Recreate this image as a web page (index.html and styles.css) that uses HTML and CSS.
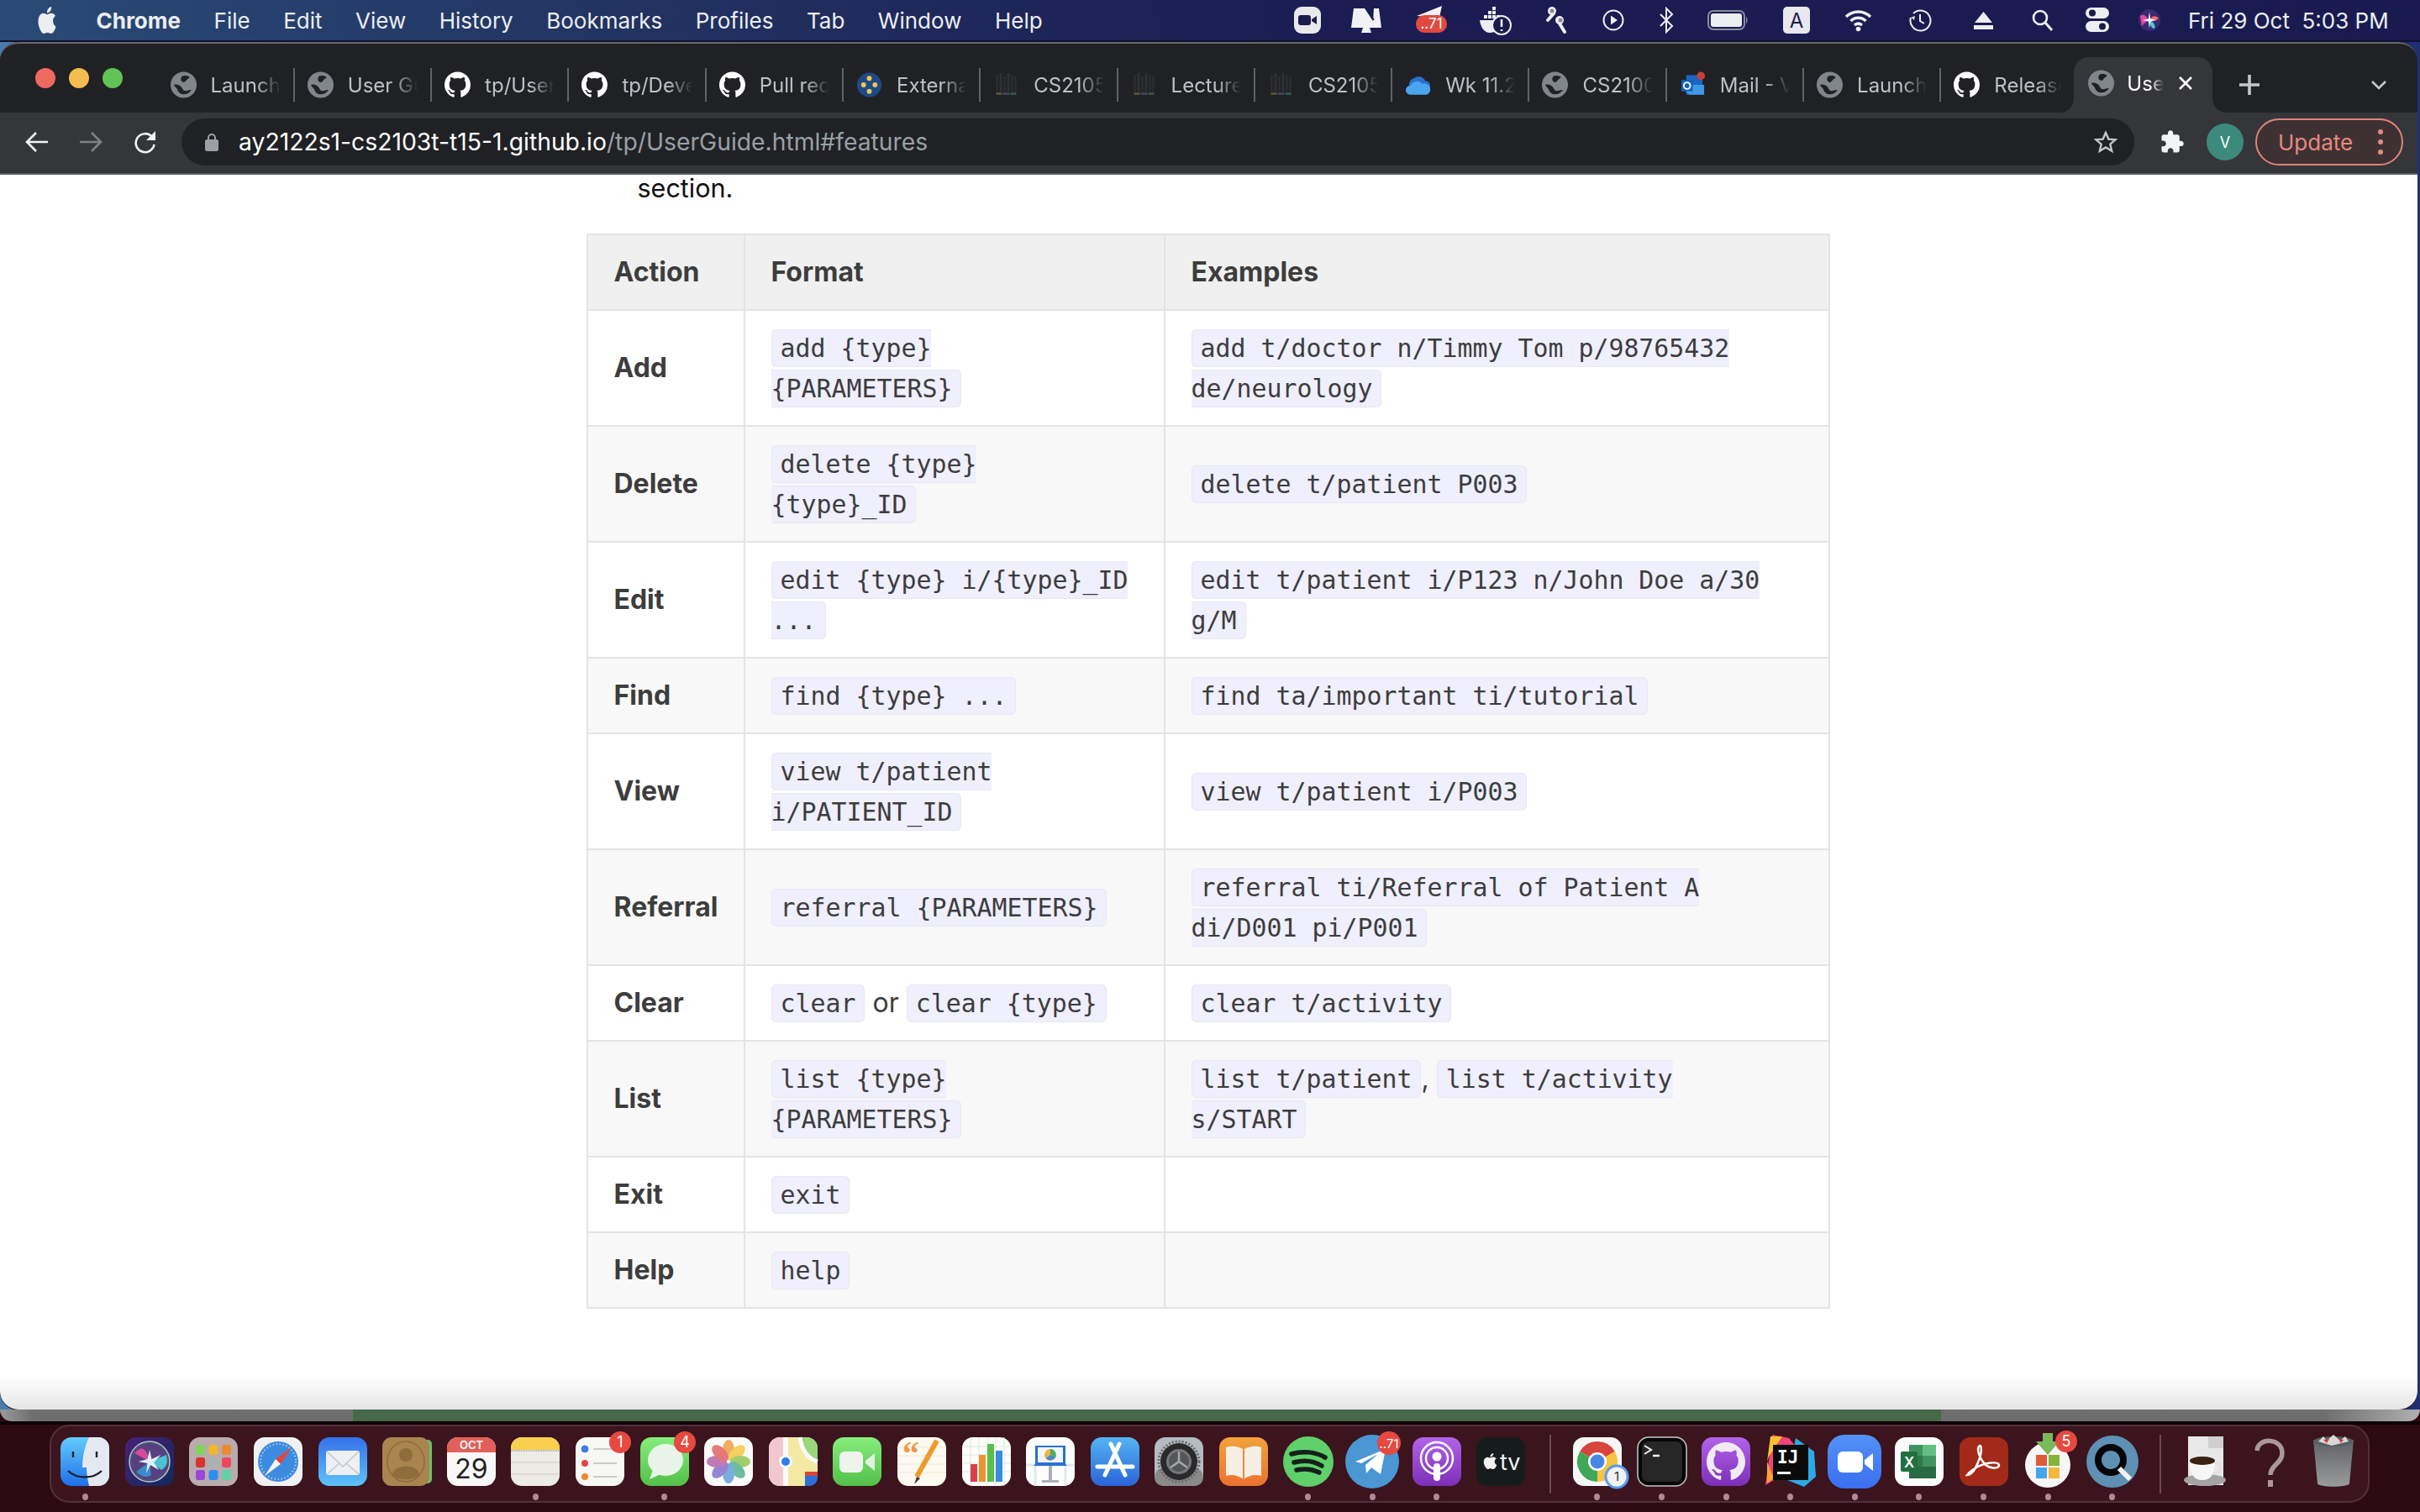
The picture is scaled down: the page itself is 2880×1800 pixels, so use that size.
FILE: index.html
```html
<!DOCTYPE html>
<html lang="en">
<head>
    <meta charset="UTF-8">
    <title>User Guide</title>
    <link rel="stylesheet" href="styles.css">
</head>
<body>
<svg class="defs" width="0" height="0">
    <defs>
        <symbol id="octocat" viewBox="0 0 16 16"><path d="M8 0C3.58 0 0 3.58 0 8c0 3.54 2.29 6.53 5.47 7.59.4.07.55-.17.55-.38 0-.19-.01-.82-.01-1.49-2.01.37-2.53-.49-2.69-.94-.09-.23-.48-.94-.82-1.13-.28-.15-.68-.52-.01-.53.63-.01 1.08.58 1.23.82.72 1.21 1.87.87 2.33.66.07-.52.28-.87.51-1.07-1.78-.2-3.64-.89-3.64-3.95 0-.87.31-1.59.82-2.15-.08-.2-.36-1.02.08-2.12 0 0 .67-.21 2.2.82.64-.18 1.32-.27 2-.27.68 0 1.36.09 2 .27 1.53-1.04 2.2-.82 2.2-.82.44 1.1.16 1.92.08 2.12.51.56.82 1.27.82 2.15 0 3.07-1.87 3.75-3.65 3.95.29.25.54.73.54 1.48 0 1.07-.01 1.93-.01 2.2 0 .21.15.46.55.38A8.013 8.013 0 0016 8c0-4.42-3.58-8-8-8z"/></symbol>
        <symbol id="globe" viewBox="0 0 28 28"><circle cx="14" cy="14" r="14" fill="#80868b"/><path d="M12 4c3-1 6-1 9 1-1 2-3 2-4 4s-3 3-5 1-1-4 0-6zM3 14c3-1 6 0 8 2s2 5 5 5 5-2 7-1c-2 3-5 5-9 5-3 0-6-2-7-5s-4-4-4-6z" fill="#202124" transform="translate(1 1) scale(.93)"/></symbol>
        <symbol id="mosaic" viewBox="0 0 28 32"><g fill="#2f3033"><rect x="2" y="4" width="2" height="20"/><rect x="6" y="2" width="3" height="22"/><rect x="11" y="6" width="2" height="18"/><rect x="15" y="2" width="3" height="22"/><rect x="20" y="4" width="2" height="20"/><rect x="24" y="6" width="2" height="18"/></g><rect x="2" y="25" width="7" height="3" fill="#5a4e36"/><rect x="10" y="25" width="8" height="3" fill="#45415c"/><rect x="19" y="25" width="7" height="3" fill="#36544c"/></symbol>
        <linearGradient id="g-finder" x1="0" y1="0" x2="0" y2="1"><stop offset="0" stop-color="#62cdfb"/><stop offset="1" stop-color="#1f6feb"/></linearGradient>
        <linearGradient id="g-mail" x1="0" y1="0" x2="0" y2="1"><stop offset="0" stop-color="#3670ea"/><stop offset="1" stop-color="#5cc3f9"/></linearGradient>
        <linearGradient id="g-green" x1="0" y1="0" x2="0" y2="1"><stop offset="0" stop-color="#86ee7c"/><stop offset="1" stop-color="#52c148"/></linearGradient>
        <linearGradient id="g-store" x1="0" y1="0" x2="0" y2="1"><stop offset="0" stop-color="#55b4f2"/><stop offset="1" stop-color="#2a63d8"/></linearGradient>
        <linearGradient id="g-books" x1="0" y1="0" x2="0" y2="1"><stop offset="0" stop-color="#f2a23a"/><stop offset="1" stop-color="#ec7130"/></linearGradient>
        <linearGradient id="g-purple" x1="0" y1="0" x2="0" y2="1"><stop offset="0" stop-color="#b263e8"/><stop offset="1" stop-color="#7c2fb8"/></linearGradient>
        <linearGradient id="g-zoom" x1="0" y1="0" x2="0" y2="1"><stop offset="0" stop-color="#5391f7"/><stop offset="1" stop-color="#3a6ff0"/></linearGradient>
        <linearGradient id="g-trash" x1="0" y1="0" x2="0" y2="1"><stop offset="0" stop-color="#5e6264"/><stop offset="1" stop-color="#9a9c9c"/></linearGradient>
        <linearGradient id="g-siri" x1="0" y1="0" x2="1" y2="1"><stop offset="0" stop-color="#4b1f78"/><stop offset="1" stop-color="#0e2a5c"/></linearGradient>
    </defs>
</svg>

<header class="menubar">
    <nav class="menus">
        <svg class="apple" width="26" height="32" viewBox="0 0 24 24" preserveAspectRatio="none"><path fill="#eceef2" d="M12.152 6.896c-.948 0-2.415-1.078-3.96-1.04-2.04.027-3.91 1.183-4.961 3.014-2.117 3.675-.546 9.103 1.519 12.09 1.013 1.454 2.208 3.09 3.792 3.039 1.52-.065 2.09-.987 3.935-.987 1.831 0 2.35.987 3.96.948 1.637-.026 2.676-1.48 3.676-2.948 1.156-1.688 1.636-3.325 1.662-3.415-.039-.013-3.182-1.221-3.22-4.857-.026-3.04 2.48-4.494 2.597-4.559-1.429-2.09-3.623-2.324-4.39-2.376-2-.156-3.675 1.09-4.61 1.09zM15.53 3.83c.843-1.012 1.4-2.427 1.245-3.83-1.207.052-2.662.805-3.532 1.818-.78.896-1.454 2.338-1.273 3.714 1.338.104 2.715-.688 3.559-1.701"/></svg>
        <span class="app-name">Chrome</span>
        <span>File</span>
        <span>Edit</span>
        <span>View</span>
        <span>History</span>
        <span>Bookmarks</span>
        <span>Profiles</span>
        <span>Tab</span>
        <span>Window</span>
        <span>Help</span>
    </nav>
    <div class="tray">
        <svg width="32" height="32" viewBox="0 0 32 32"><rect width="32" height="32" rx="9" fill="#e8e8ee"/><rect x="5" y="10" width="15" height="12" rx="3" fill="#1a1c4a"/><path d="M21 15l6-4v10l-6-4z" fill="#1a1c4a"/></svg>
        <svg width="36" height="32" viewBox="0 0 36 32"><path d="M3 2h13l10 15 1-15h6l3 23H0z" fill="#f2f2f5"/><path d="M14 25h8l2 6H12z" fill="#f2f2f5"/><path d="M18 2l9 14" stroke="#1a1c4a" stroke-width="1.5"/></svg>
        <svg width="37" height="36" viewBox="0 0 37 36"><path d="M1 13L31 1l-3 14z" fill="#f2f2f5"/><rect y="12" width="37" height="21" rx="10" fill="#e0493f"/><text class="tray-badge" x="18.5" y="28">..71</text></svg>
        <svg width="38" height="36" viewBox="0 0 38 36"><g fill="#eceef2"><rect x="15" y="2" width="4" height="4"/><rect x="10" y="7" width="4" height="4"/><rect x="15" y="7" width="4" height="4"/><rect x="5" y="12" width="4" height="4"/><rect x="10" y="12" width="4" height="4"/><rect x="15" y="12" width="4" height="4"/><rect x="20" y="12" width="4" height="4"/><path d="M0 18h26c1 8-5 15-14 15C5 33 1 26 0 18z"/></g><circle cx="26" cy="24" r="11" fill="#1a1c4a" stroke="#eceef2" stroke-width="2"/><path d="M26 17v9M26 29v2" stroke="#eceef2" stroke-width="2.6"/></svg>
        <svg width="24" height="36" viewBox="0 0 24 36"><circle cx="7" cy="7" r="5" fill="#eceef2"/><path d="M9 10L2 18" stroke="#eceef2" stroke-width="4" stroke-linecap="round"/><circle cx="7" cy="7" r="2.5" fill="#8a8a96"/><circle cx="16" cy="18" r="5" fill="#eceef2"/><path d="M16 22l6 10" stroke="#eceef2" stroke-width="4" stroke-linecap="round"/><circle cx="17" cy="18" r="2.5" fill="#8a8a96"/></svg>
        <svg width="26" height="26" viewBox="0 0 26 26"><circle cx="13" cy="13" r="11.5" fill="none" stroke="#eceef2" stroke-width="2"/><path d="M10 7.5l8 5.5-8 5.5z" fill="#eceef2"/></svg>
        <svg width="17" height="32" viewBox="0 0 17 32"><path d="M1 9l14 14-7 7V2l7 7L1 23" fill="none" stroke="#eceef2" stroke-width="2"/></svg>
        <svg width="49" height="24" viewBox="0 0 49 24"><rect x="1" y="1" width="43" height="22" rx="6" fill="none" stroke="#8a8aa0" stroke-width="2"/><rect x="4" y="4" width="37" height="16" rx="3" fill="#eceef2"/><path d="M46 8c2 1 2 7 0 8z" fill="#8a8aa0"/></svg>
        <svg width="32" height="32" viewBox="0 0 32 32"><rect width="32" height="32" rx="5" fill="#e8e8ee"/><text class="tray-key" x="16" y="25">A</text></svg>
        <svg width="33" height="28" viewBox="0 0 33 28"><path d="M2 10c8-8 21-8 29 0M7.5 15c5-5 13-5 18 0M12 20c3-2.5 6-2.5 9 0" fill="none" stroke="#eceef2" stroke-width="3.4"/><circle cx="16.5" cy="24.5" r="2.8" fill="#eceef2"/></svg>
        <svg width="28" height="28" viewBox="0 0 28 28"><path d="M6 6a12 12 0 1 1-3 5" fill="none" stroke="#eceef2" stroke-width="2"/><path d="M0 12l4-1 3 3 1-5z" fill="#eceef2"/><path d="M14 7v8l5 3" fill="none" stroke="#eceef2" stroke-width="2"/></svg>
        <svg width="23" height="22" viewBox="0 0 23 22"><path d="M11.5 1L22 14H1z" fill="#eceef2"/><rect y="17" width="23" height="5" fill="#eceef2"/></svg>
        <svg width="25" height="27" viewBox="0 0 25 27"><circle cx="10" cy="10" r="8" fill="none" stroke="#eceef2" stroke-width="2.6"/><path d="M16 16l8 9" stroke="#eceef2" stroke-width="3"/></svg>
        <svg width="28" height="30" viewBox="0 0 28 30"><rect width="28" height="13" rx="6.5" fill="#eceef2"/><circle cx="8" cy="6.5" r="4" fill="#1a1c4a"/><rect y="16" width="28" height="13" rx="6.5" fill="#eceef2"/><circle cx="20" cy="22.5" r="4" fill="#1a1c4a"/></svg>
        <svg width="26" height="26" viewBox="0 0 26 26"><circle cx="13" cy="13" r="13" fill="#3a2a70"/><path d="M2 8c6-4 8 3 11 5-4 1-8 6-9 7z" fill="#e54a9a"/><path d="M13 13c3-6 8-6 11-2-3 3-8 3-11 2z" fill="#f06f6a"/><path d="M13 13c3 1 8 5 6 10-4 0-6-6-6-10z" fill="#49d0d8"/><path d="M13 3l1.2 8.5 7 1.5-7 1.5L13 23l-1.2-8.5-7-1.5 7-1.5z" fill="#f4f4ff"/></svg>
        <time class="clock">Fri 29 Oct&nbsp; 5:03 PM</time>
    </div>
</header>

<main class="desktop">
    <div class="window">
        <div class="tabstrip">
            <div class="lights"><i class="light red"></i><i class="light yellow"></i><i class="light green"></i></div>
            <div class="tab"><svg class="favicon"><use href="#globe"/></svg><span class="tab-title">Launch</span></div>
            <div class="tab"><svg class="favicon"><use href="#globe"/></svg><span class="tab-title">User Gu</span></div>
            <div class="tab"><svg class="favicon octo"><use href="#octocat"/></svg><span class="tab-title">tp/User</span></div>
            <div class="tab"><svg class="favicon octo"><use href="#octocat"/></svg><span class="tab-title">tp/Deve</span></div>
            <div class="tab"><svg class="favicon octo"><use href="#octocat"/></svg><span class="tab-title">Pull req</span></div>
            <div class="tab"><svg class="favicon" viewBox="0 0 32 32"><circle cx="16" cy="16" r="15" fill="#1d4a86"/><circle cx="16" cy="8" r="3" fill="#f0c84a"/><circle cx="16" cy="24" r="3" fill="#f0c84a"/><circle cx="9" cy="16" r="3" fill="#f0c84a"/><circle cx="23" cy="16" r="3" fill="#f0c84a"/></svg><span class="tab-title">Externa</span></div>
            <div class="tab"><svg class="favicon"><use href="#mosaic"/></svg><span class="tab-title">CS2105</span></div>
            <div class="tab"><svg class="favicon"><use href="#mosaic"/></svg><span class="tab-title">Lecture</span></div>
            <div class="tab"><svg class="favicon"><use href="#mosaic"/></svg><span class="tab-title">CS2105</span></div>
            <div class="tab"><svg class="favicon" viewBox="0 0 32 32"><path d="M8 22a8 8 0 0 1 3-14 9 9 0 0 1 14 3 6 6 0 0 1 0 12z" fill="#2a6fd0"/><path d="M6 28a5 5 0 0 1 1-11 8 8 0 0 1 14-2 6 6 0 0 1 6 13z" fill="#4aa5ee"/></svg><span class="tab-title">Wk 11.2</span></div>
            <div class="tab"><svg class="favicon"><use href="#globe"/></svg><span class="tab-title">CS2100</span></div>
            <div class="tab"><svg class="favicon" viewBox="0 0 32 32"><rect x="8" y="4" width="20" height="24" fill="#1a66c2"/><path d="M8 16h22v12H12l-4-3z" fill="#3f9ae6"/><rect x="2" y="10" width="14" height="14" fill="#1461b8"/><circle cx="9" cy="17" r="4" fill="none" stroke="#fff" stroke-width="2"/><circle cx="26" cy="5" r="5" fill="#c8403a"/></svg><span class="tab-title">Mail - V</span></div>
            <div class="tab"><svg class="favicon"><use href="#globe"/></svg><span class="tab-title">Launch</span></div>
            <div class="tab tab-last"><svg class="favicon octo"><use href="#octocat"/></svg><span class="tab-title">Release</span></div>
            <div class="tab-active"><svg class="favicon"><use href="#globe"/></svg><span class="tab-title">Use</span>
                <svg class="tab-close" width="18" height="18" viewBox="0 0 18 18"><path d="M2 2l14 14M16 2L2 16" stroke="#fff" stroke-width="2.6"/></svg>
            </div>
            <svg class="new-tab" width="24" height="24" viewBox="0 0 24 24"><path d="M12 0v24M0 12h24" stroke="#c4c7ca" stroke-width="3.6"/></svg>
            <svg class="tab-menu" width="20" height="12" viewBox="0 0 20 12"><path d="M2 2l8 8 8-8" fill="none" stroke="#c4c7ca" stroke-width="2.6"/></svg>
        </div>

        <div class="toolbar">
            <svg class="nav-icon" width="28" height="28" viewBox="0 0 28 28"><path d="M27 14H3M13 3L2 14l11 11" fill="none" stroke="#f1f3f4" stroke-width="2.6"/></svg>
            <svg class="nav-icon" width="28" height="28" viewBox="0 0 28 28"><path d="M1 14h24M15 3l11 11-11 11" fill="none" stroke="#7f8285" stroke-width="2.6"/></svg>
            <svg class="nav-icon" width="28" height="28" viewBox="0 0 28 28"><path d="M23 8a11 11 0 1 0 2.5 9" fill="none" stroke="#f1f3f4" stroke-width="2.6"/><path d="M27 1v11H16z" fill="#f1f3f4"/></svg>
            <div class="omnibox">
                <svg width="16" height="22" viewBox="0 0 16 22"><path d="M4 9V6a4 4 0 0 1 8 0v3" fill="none" stroke="#9aa0a6" stroke-width="2"/><rect y="8" width="16" height="14" rx="2.5" fill="#9aa0a6"/></svg>
                <span class="url"><span class="url-host">ay2122s1-cs2103t-t15-1.github.io</span>/tp/UserGuide.html#features</span>
                <svg class="star" width="28" height="28" viewBox="0 0 28 28"><path d="M14 3l3.3 7.6 8.2.7-6.2 5.4 1.9 8.1L14 20.5l-7.200 4.300 1.900-8.100-6.200-5.400 8.200-.7z" fill="none" stroke="#c4c7ca" stroke-width="2.4"/></svg>
            </div>
            <svg class="puzzle" width="30" height="30" viewBox="0 0 24 24"><path fill="#f1f3f4" d="M20.5 11H19V7c0-1.1-.9-2-2-2h-4V3.5C13 2.12 11.88 1 10.5 1S8 2.12 8 3.5V5H4c-1.1 0-1.99.9-1.99 2v3.8H3.5c1.49 0 2.7 1.21 2.7 2.7s-1.21 2.7-2.7 2.7H2V20c0 1.1.9 2 2 2h3.8v-1.5c0-1.49 1.21-2.7 2.7-2.7 1.49 0 2.7 1.21 2.7 2.7V22H17c1.1 0 2-.9 2-2v-4h1.5c1.38 0 2.5-1.12 2.5-2.5S21.88 11 20.5 11z"/></svg>
            <div class="avatar">V</div>
            <div class="update">
                <span>Update</span>
                <span class="update-dots"><i></i><i></i><i></i></span>
            </div>
        </div>

        <div class="content">
            <div class="page">
                <p class="lead">section.</p>
                <table class="summary">
                    <colgroup><col class="col-action"><col class="col-format"><col></colgroup>
                    <thead>
                        <tr><th>Action</th><th>Format</th><th>Examples</th></tr>
                    </thead>
                    <tbody>
                        <tr><td>Add</td><td><code>add {type} {PARAMETERS}</code></td><td><code>add t/doctor n/Timmy Tom p/98765432 de/neurology</code></td></tr>
                        <tr><td>Delete</td><td><code>delete {type} {type}_ID</code></td><td><code>delete t/patient P003</code></td></tr>
                        <tr><td>Edit</td><td><code>edit {type} i/{type}_ID ...</code></td><td><code>edit t/patient i/P123 n/John Doe a/30 g/M</code></td></tr>
                        <tr><td>Find</td><td><code>find {type} ...</code></td><td><code>find ta/important ti/tutorial</code></td></tr>
                        <tr><td>View</td><td><code>view t/patient i/PATIENT_ID</code></td><td><code>view t/patient i/P003</code></td></tr>
                        <tr><td>Referral</td><td><code>referral {PARAMETERS}</code></td><td><code>referral ti/Referral of Patient A di/D001 pi/P001</code></td></tr>
                        <tr><td>Clear</td><td><code>clear</code> or <code>clear {type}</code></td><td><code>clear t/activity</code></td></tr>
                        <tr><td>List</td><td><code>list {type} {PARAMETERS}</code></td><td><code>list t/patient</code>, <code>list t/activity s/START</code></td></tr>
                        <tr><td>Exit</td><td><code>exit</code></td><td></td></tr>
                        <tr><td>Help</td><td><code>help</code></td><td></td></tr>
                    </tbody>
                </table>
            </div>
        </div>
    </div>
</main>

<div class="behind"><i class="behind-grey"></i><i class="behind-green"></i><i class="behind-rest"></i></div>

<footer class="dock-row">
    <div class="dock">
        <div class="dock-item on"><svg viewBox="0 0 64 64"><rect x="3" y="3" width="58" height="58" rx="13" fill="url(#g-finder)"/><path d="M37 3h11a13 13 0 0 1 13 13v32a13 13 0 0 1-13 13H37c-2-8-3-16-3-22h-5c0-12 3-26 8-36z" fill="#e4e9f1"/><path d="M18 20v7M46 20v7" stroke="#1a2230" stroke-width="2.4"/><path d="M12 43c10 10 30 10 40 0" fill="none" stroke="#1a2230" stroke-width="2.4"/></svg></div>
        <div class="dock-item"><svg viewBox="0 0 64 64"><rect x="3" y="3" width="58" height="58" rx="13" fill="url(#g-siri)"/><circle cx="32" cy="32" r="24" fill="#4a5270" stroke="#b7bfd6" stroke-width="1.5"/><circle cx="32" cy="32" r="21" fill="#5a3f80"/><path d="M32 32L14 22c8-9 14-8 18 10z" fill="#d84a9c"/><path d="M32 32l20-8c2 8 1 14-6 18z" fill="#4dc3d2"/><path d="M32 32l-16 12c6 6 12 8 18 4z" fill="#3c8ac8"/><path d="M32 18l2.5 11 11-5-8.500 9 6 9-10-6-5 10 1.500-12-11-2 11-3z" fill="#dff0f6"/></svg></div>
        <div class="dock-item"><svg viewBox="0 0 64 64"><rect x="3" y="3" width="58" height="58" rx="13" fill="#b9abae"/><rect x="11" y="12" width="11" height="12" rx="3" fill="#7fd65a"/><rect x="26.5" y="12" width="11" height="12" rx="3" fill="#f2b52e"/><rect x="42" y="12" width="11" height="12" rx="3" fill="#ea8c2e"/><rect x="11" y="27" width="11" height="12" rx="3" fill="#d8352a"/><rect x="26.5" y="27" width="11" height="12" rx="3" fill="#a8b2b4"/><rect x="42" y="27" width="11" height="12" rx="3" fill="#ea4a5c"/><rect x="11" y="42" width="11" height="12" rx="3" fill="#9a46dc"/><rect x="26.5" y="42" width="11" height="12" rx="3" fill="#2f8cf2"/><rect x="42" y="42" width="11" height="12" rx="3" fill="#62d0a8"/></svg></div>
        <div class="dock-item"><svg viewBox="0 0 64 64"><rect x="3" y="3" width="58" height="58" rx="13" fill="#f1f1f3"/><circle cx="32" cy="32" r="24" fill="#3d8be0"/><circle cx="32" cy="32" r="21" fill="none" stroke="#dfeaf6" stroke-width="2" stroke-dasharray="1 3"/><path d="M48 15L29 29l6 6z" fill="#e5453c"/><path d="M16 49l19-14-6-6z" fill="#f4f4f4"/></svg></div>
        <div class="dock-item"><svg viewBox="0 0 64 64"><rect x="3" y="3" width="58" height="58" rx="13" fill="url(#g-mail)"/><rect x="12" y="19" width="40" height="29" rx="3" fill="#eef0f3"/><path d="M13 20l19 18 19-18M13 47l15-13M51 47L36 34" fill="none" stroke="#c5c8cf" stroke-width="1.5"/></svg></div>
        <div class="dock-item"><svg viewBox="0 0 64 64"><rect x="50" y="6" width="12" height="52" rx="5" fill="#6cc06a"/><rect x="3" y="3" width="56" height="58" rx="11" fill="#a9844e"/><ellipse cx="31" cy="32" rx="22" ry="24" fill="none" stroke="#8e6c3c" stroke-width="1.5"/><circle cx="31" cy="24" r="8" fill="#8e6c3c"/><path d="M14 48c4-14 30-14 34 0-8 7-26 7-34 0z" fill="#8e6c3c"/></svg></div>
        <div class="dock-item"><svg viewBox="0 0 64 64"><rect x="3" y="3" width="58" height="58" rx="13" fill="#f8f8f8"/><path d="M3 21V16A13 13 0 0 1 16 3h32a13 13 0 0 1 13 13v5z" fill="#e2605a"/><text class="cal-month" x="32" y="17">OCT</text><text class="cal-day" x="32" y="52">29</text></svg></div>
        <div class="dock-item on"><svg viewBox="0 0 64 64"><rect x="3" y="3" width="58" height="58" rx="13" fill="#ecebe6"/><path d="M3 18V16A13 13 0 0 1 16 3h32a13 13 0 0 1 13 13v2z" fill="#f8cf4e"/><path d="M3 19h58" stroke="#a8a8a4" stroke-width="2" stroke-dasharray="1 1"/><path d="M3 33h58M3 47h58" stroke="#d6d6d2" stroke-width="1.5"/></svg></div>
        <div class="dock-item"><svg viewBox="0 0 64 64"><rect x="3" y="3" width="58" height="58" rx="13" fill="#f7f7f5"/><circle cx="14" cy="17" r="4" fill="#3a7fe8" stroke="#3a7fe8"/><circle cx="14" cy="34" r="4" fill="#e5453c"/><circle cx="14" cy="50" r="4" fill="#ee8a2c"/><path d="M24 17h28M24 34h28M24 50h28" stroke="#bdbdbd" stroke-width="1.6"/><circle class="badge" cx="56" cy="9" r="13"/><text class="badge-text" x="56" y="15">1</text></svg></div>
        <div class="dock-item on"><svg viewBox="0 0 64 64"><rect x="3" y="3" width="58" height="58" rx="13" fill="url(#g-green)"/><ellipse cx="33" cy="30" rx="21" ry="19" fill="#eaf5ea"/><path d="M18 42l-4 11 13-6z" fill="#eaf5ea"/><circle class="badge" cx="56" cy="9" r="13"/><text class="badge-text" x="56" y="15">4</text></svg></div>
        <div class="dock-item"><svg viewBox="0 0 64 64"><rect x="3" y="3" width="58" height="58" rx="13" fill="#fafafa"/><g opacity=".8"><ellipse cx="32" cy="18" rx="7" ry="12" fill="#f09a3a"/><ellipse cx="32" cy="18" rx="7" ry="12" fill="#f2c83a" transform="rotate(45 32 32)"/><ellipse cx="32" cy="18" rx="7" ry="12" fill="#8cc24a" transform="rotate(90 32 32)"/><ellipse cx="32" cy="18" rx="7" ry="12" fill="#4aae8a" transform="rotate(135 32 32)"/><ellipse cx="32" cy="18" rx="7" ry="12" fill="#5a9ad8" transform="rotate(180 32 32)"/><ellipse cx="32" cy="18" rx="7" ry="12" fill="#7a6ac4" transform="rotate(225 32 32)"/><ellipse cx="32" cy="18" rx="7" ry="12" fill="#b45aa8" transform="rotate(270 32 32)"/><ellipse cx="32" cy="18" rx="7" ry="12" fill="#e05a5a" transform="rotate(315 32 32)"/></g></svg></div>
        <div class="dock-item"><svg viewBox="0 0 64 64"><rect x="3" y="3" width="58" height="58" rx="13" fill="#f4e9a2"/><path d="M3 16A13 13 0 0 1 16 3h4v58h-4A13 13 0 0 1 3 48z" fill="#f2c8d0"/><path d="M40 3h8a13 13 0 0 1 13 13v16C52 30 42 20 40 3z" fill="#9ad67a"/><path d="M20 3h6v58h-6z" fill="#fafafa"/><circle cx="23" cy="32" r="8" fill="#fafafa"/><circle cx="23" cy="32" r="5" fill="#2f7ee8"/><path d="M40 3c2 17 12 27 21 29" fill="none" stroke="#fafafa" stroke-width="5"/><path d="M46 44h15v6c0 7-4 11-11 11h-4z" fill="#2f6fd8"/><path d="M46 44h15v5H46z" fill="#d8453c"/></svg></div>
        <div class="dock-item"><svg viewBox="0 0 64 64"><rect x="3" y="3" width="58" height="58" rx="13" fill="url(#g-green)"/><rect x="11" y="20" width="28" height="25" rx="6" fill="#eef3ee"/><path d="M42 31l11-9v21l-11-9z" fill="#e2efe2"/></svg></div>
        <div class="dock-item"><svg viewBox="0 0 64 64"><rect x="3" y="3" width="58" height="58" rx="13" fill="#fdfaf2"/><path d="M3 15h58M3 25h58M3 35h58M3 45h58" stroke="#f4e6cf" stroke-width="1"/><path d="M50 7L26 50" stroke="#ee9a2c" stroke-width="6"/><path d="M26 50l-3 9 7-7z" fill="#3a3a3a"/><text class="pages-quote" x="9" y="36">“</text></svg></div>
        <div class="dock-item"><svg viewBox="0 0 64 64"><rect x="3" y="3" width="58" height="58" rx="13" fill="#fdfdfb"/><path d="M3 14h58M3 24h58M3 34h58M3 44h58M13 3v58M23 3v58M33 3v58M43 3v58M53 3v58" stroke="#d9ecd6" stroke-width="1"/><rect x="13" y="35" width="8" height="21" fill="#d8404a"/><rect x="23" y="24" width="8" height="32" fill="#ec9434"/><rect x="33" y="11" width="8" height="45" fill="#56c04a"/><rect x="43" y="19" width="8" height="37" fill="#3a8ce0"/></svg></div>
        <div class="dock-item"><svg viewBox="0 0 64 64"><rect x="3" y="3" width="58" height="58" rx="13" fill="#fdfdfd"/><path d="M3 36h58M14 36v25M50 36v25" stroke="#e0e8f2" stroke-width="3"/><rect x="14" y="13" width="36" height="23" fill="#2a6fd8"/><rect x="17" y="15" width="30" height="18" fill="#f2f6fc"/><circle cx="32" cy="24" r="7" fill="#f0b23a"/><path d="M32 24V17a7 7 0 0 1 6 10z" fill="#4aae6a"/><path d="M32 24l6 3a7 7 0 0 1-11 1z" fill="#3a8ce0"/><path d="M12 37h40l-3-3H15z" fill="#2a6fd8"/><rect x="30" y="37" width="4" height="18" fill="#a8b0bc"/><rect x="22" y="54" width="20" height="3" fill="#a8b0bc"/></svg></div>
        <div class="dock-item"><svg viewBox="0 0 64 64"><rect x="3" y="3" width="58" height="58" rx="13" fill="url(#g-store)"/><path d="M37 11L20 48M27 11l17 37M11 38h42" fill="none" stroke="#fff" stroke-width="5" stroke-linecap="round"/></svg></div>
        <div class="dock-item"><svg viewBox="0 0 64 64"><rect x="3" y="3" width="58" height="58" rx="13" fill="#b4bcc2"/><rect x="3" y="40" width="58" height="21" rx="10" fill="#8a8a8a"/><circle cx="32" cy="32" r="22" fill="#2a2a2c"/><circle cx="32" cy="32" r="24" fill="none" stroke="#6a6a6c" stroke-width="3" stroke-dasharray="2 2"/><circle cx="32" cy="32" r="15" fill="#77787a"/><circle cx="32" cy="32" r="12" fill="#55565a"/><path d="M32 20v12l-10 7M32 32l10 7" fill="none" stroke="#a8a8aa" stroke-width="2.5"/></svg></div>
        <div class="dock-item"><svg viewBox="0 0 64 64"><rect x="3" y="3" width="58" height="58" rx="13" fill="url(#g-books)"/><path d="M32 18C26 13 17 13 11 15v34c7-2 14-1 21 4 7-5 14-6 21-4V15c-6-2-15-2-21 3z" fill="#f6efe4"/><path d="M32 18v35" stroke="#ec8a3a" stroke-width="2"/></svg></div>
        <div class="dock-item on"><svg viewBox="0 0 64 64"><circle cx="32" cy="32" r="30" fill="#5fd06a"/><path d="M12 23c13-4 28-3 40 4M15 33c11-3 23-2 33 4M18 42c9-2 19-1 27 3" fill="none" stroke="#15201a" stroke-width="5.5" stroke-linecap="round"/></svg></div>
        <div class="dock-item on"><svg viewBox="0 0 64 64"><circle cx="32" cy="32" r="32" fill="#4a97d4"/><path d="M12 32l36-15-6 30-11-8-6 7-1-10 15-13-20 11z" fill="#fff"/><circle class="badge" cx="52" cy="10" r="14"/><text class="badge-text small" x="52" y="16">..71</text></svg></div>
        <div class="dock-item on"><svg viewBox="0 0 64 64"><rect x="3" y="3" width="58" height="58" rx="13" fill="url(#g-purple)"/><circle cx="32" cy="28" r="19" fill="none" stroke="#fff" stroke-width="2.5"/><circle cx="32" cy="28" r="13" fill="none" stroke="#fff" stroke-width="2.5"/><circle cx="32" cy="26" r="5.5" fill="#fff"/><rect x="28" y="34" width="8" height="21" rx="4" fill="#fff"/></svg></div>
        <div class="dock-item"><svg viewBox="0 0 64 64"><rect x="3" y="3" width="58" height="58" rx="13" fill="#161c1c"/><svg x="10" y="21" width="19" height="21" viewBox="0 0 24 24"><path fill="#f2f2f2" d="M12.152 6.896c-.948 0-2.415-1.078-3.96-1.04-2.04.027-3.91 1.183-4.961 3.014-2.117 3.675-.546 9.103 1.519 12.09 1.013 1.454 2.208 3.09 3.792 3.039 1.52-.065 2.09-.987 3.935-.987 1.831 0 2.35.987 3.96.948 1.637-.026 2.676-1.48 3.676-2.948 1.156-1.688 1.636-3.325 1.662-3.415-.039-.013-3.182-1.221-3.22-4.857-.026-3.04 2.48-4.494 2.597-4.559-1.429-2.09-3.623-2.324-4.39-2.376-2-.156-3.675 1.09-4.61 1.09zM15.53 3.83c.843-1.012 1.4-2.427 1.245-3.83-1.207.052-2.662.805-3.532 1.818-.78.896-1.454 2.338-1.273 3.714 1.338.104 2.715-.688 3.559-1.701"/></svg><text class="tv-text" x="31" y="42">tv</text></svg></div>
        <i class="dock-sep"></i>
        <div class="dock-item on"><svg viewBox="0 0 64 64"><rect x="3" y="3" width="58" height="58" rx="13" fill="#f6f6f6"/><path d="M32 32L11.2 20A24 24 0 0 1 52.8 20z" fill="#d8453c"/><path d="M32 32l20.8-12A24 24 0 0 1 32 56z" fill="#f6c342"/><path d="M32 32v24A24 24 0 0 1 11.2 20z" fill="#3fa757"/><circle cx="32" cy="32" r="11" fill="#fff"/><circle cx="32" cy="32" r="8.5" fill="#4a86e8"/><circle cx="55" cy="50" r="13" fill="#f2f2f2" stroke="#5a9af0" stroke-width="3"/><text class="chrome-count" x="55" y="55">1</text></svg></div>
        <div class="dock-item on"><svg viewBox="0 0 64 64"><rect x="3" y="3" width="58" height="58" rx="13" fill="#050505" stroke="#c8c8c8" stroke-width="1.5"/><rect x="8" y="8" width="48" height="48" rx="7" fill="#262626"/><path d="M11 13l8 5-8 5" fill="none" stroke="#f2f2f2" stroke-width="2"/><path d="M21 25h8" stroke="#f2f2f2" stroke-width="2.5"/></svg></div>
        <div class="dock-item on"><svg viewBox="0 0 64 64"><rect x="3" y="3" width="58" height="58" rx="13" fill="url(#g-purple)"/><svg x="9" y="9" width="46" height="46"><use href="#octocat" fill="#efeaf4"/></svg></svg></div>
        <div class="dock-item on"><svg viewBox="0 0 64 64"><path d="M10 0l20 4 8 10-26 40-10 6z" fill="#f0447e"/><path d="M8 2l14 0-16 24-2 6z" fill="#f7c32c"/><path d="M38 4l22 16 2 30-14 12-20-8z" fill="#2ea9e8"/><path d="M4 32l8 20-8 6z" fill="#f6a42c"/><rect x="11" y="12" width="42" height="42" fill="#0a0a0a"/><text class="ij-text" x="16" y="34">IJ</text><rect x="16" y="44" width="16" height="3" fill="#fff"/></svg></div>
        <div class="dock-item on"><svg viewBox="0 0 64 64"><rect width="64" height="64" rx="20" fill="url(#g-zoom)"/><rect x="12" y="20" width="30" height="25" rx="6" fill="#fff"/><path d="M44 30l10-8v21l-10-8z" fill="#fff"/></svg></div>
        <div class="dock-item on"><svg viewBox="0 0 64 64"><rect x="3" y="3" width="58" height="58" rx="13" fill="#fdfdfd"/><rect x="20" y="12" width="32" height="40" rx="2" fill="#33784a"/><rect x="36" y="12" width="16" height="13" fill="#62c084"/><rect x="36" y="25" width="16" height="13" fill="#3f9460"/><rect x="20" y="12" width="16" height="13" fill="#3f9460"/><rect x="20" y="38" width="32" height="14" fill="#2a6a42"/><rect x="10" y="20" width="20" height="24" rx="2" fill="#227040"/><text class="xl-text" x="20" y="39">X</text></svg></div>
        <div class="dock-item on"><svg viewBox="0 0 64 64"><rect x="3" y="3" width="58" height="58" rx="13" fill="#a32a18"/><path d="M12 48c6 0 12-10 16-24 2-9 0-13-2-10-3 5 2 16 8 22 5 4 14 5 16 1 1-4-8-5-18-2-10 3-18 10-20 13z" fill="none" stroke="#fff" stroke-width="2.5"/></svg></div>
        <div class="dock-item on"><svg viewBox="0 0 64 64"><circle cx="32" cy="36" r="27" fill="#f6f6f6"/><rect x="18" y="24" width="13" height="13" fill="#e05a3a"/><rect x="33" y="24" width="13" height="13" fill="#86b43a"/><rect x="18" y="39" width="13" height="13" fill="#42a5ee"/><rect x="33" y="39" width="13" height="13" fill="#f4b83c"/><path d="M26-2h12v10h8L32 24 18 8h8z" fill="#7ab85a"/><circle class="badge" cx="54" cy="8" r="13"/><text class="badge-text" x="54" y="14">5</text></svg></div>
        <div class="dock-item on"><svg viewBox="0 0 64 64"><circle cx="32" cy="32" r="31" fill="#5e90b4"/><circle cx="30" cy="30" r="15" fill="#5e90b4" stroke="#050505" stroke-width="8"/><path d="M40 40l13 13" stroke="#f2f2f2" stroke-width="6"/></svg></div>
        <i class="dock-sep dock-sep-end"></i>
        <div class="dock-item"><svg viewBox="0 0 64 64"><path d="M12 2h28l14 10v48H12z" fill="#e8e8e8"/><path d="M36 2h18v14H36z" fill="#cfcfcf"/><ellipse cx="32" cy="54" rx="25" ry="7" fill="#a4a4a4"/><path d="M14 30h30c0 16-4 24-15 24S14 46 14 30z" fill="#f6f6f6"/><ellipse cx="29" cy="31" rx="15" ry="5" fill="#3a2212"/><path d="M44 34c10-2 10 12-2 12" fill="none" stroke="#e2e2e2" stroke-width="3"/></svg></div>
        <div class="dock-item"><svg viewBox="0 0 64 64"><path d="M17 19c1-16 30-16 30 3 0 12-14 14-14 26" fill="none" stroke="#a8989e" stroke-width="5.5"/><rect x="30" y="54" width="6" height="8" fill="#a8989e"/></svg></div>
        <div class="dock-item"><svg viewBox="0 0 64 64"><path d="M8 6h48l-5 52c-1 5-37 5-38 0z" fill="url(#g-trash)"/><ellipse cx="32" cy="8" rx="24" ry="6" fill="#5a5e60"/><path d="M14 8l6-6 4 5 8-7 8 7 6-5 4 6-20 5z" fill="#d8d8d8"/><path d="M20 6l4 4 3-5zM38 5l3 5 3-4z" fill="#c8403a"/></svg></div>
    </div>
</footer>
</body>
</html>
```

FILE: styles.css
```css
body {
    margin: 0;
    width: 2880px;
    height: 1800px;
    overflow: hidden;
    display: flex;
    flex-direction: column;
    font-family: Inter, "Liberation Sans", sans-serif;
    background-color: #2c0a12;
}
.defs {
    position: absolute;
}

/* mac menu bar */
.menubar {
    height: 48px;
    flex: none;
    display: flex;
    align-items: center;
    justify-content: space-between;
    padding: 0 39px 0 43px;
    color: #eceef2;
    font-size: 26px;
    background: linear-gradient(90deg, #2a4a76 0%, #223462 25%, #1a1c52 55%, #191b50 100%);
}
.menus {
    display: flex;
    align-items: center;
    gap: 39.5px;
}
.apple {
    margin-right: 6px;
}
.app-name {
    font-weight: 700;
}
.tray {
    display: grid;
    grid-template-columns: 68px 77px 76px 79px 67px 68px 57px 90px 73px 76px 78px 69px 64px 63px 59px 237px;
    align-items: center;
}
.clock {
    white-space: nowrap;
}
.tray-badge {
    font-size: 17px;
    fill: #fff;
    text-anchor: middle;
}
.tray-key {
    font-size: 24px;
    fill: #1a1c4a;
    text-anchor: middle;
}

/* desktop and browser window */
.desktop {
    height: 1630px;
    flex: none;
    background: linear-gradient(90deg, #4a7cae 0%, #1f2f74 100%);
    border-top: 2px solid #10122c;
    box-sizing: border-box;
}
.window {
    width: 2877px;
    height: 100%;
    display: flex;
    flex-direction: column;
    overflow: hidden;
    border-radius: 22px;
    background-color: #202124;
    box-shadow: 0 1px 0 #111;
}
.tabstrip {
    height: 84px;
    flex: none;
    box-sizing: border-box;
    display: flex;
    padding-top: 16px;
    background-color: #202124;
    border-top: 2px solid #68696c;
    border-radius: 22px 22px 0 0;
}
.lights {
    width: 187.5px;
    flex: none;
    display: flex;
    gap: 16px;
    padding: 13px 0 0 42px;
    box-sizing: border-box;
}
.light {
    width: 24px;
    height: 24px;
    border-radius: 50%;
}
.red { background-color: #ee6a5f; }
.yellow { background-color: #f5bd4f; }
.green { background-color: #61c454; }

.tab {
    width: 163.3px;
    height: 40px;
    margin-top: 13px;
    flex: none;
    box-sizing: border-box;
    display: flex;
    align-items: center;
    padding: 0 15px 0 15px;
    border-right: 2px solid #5f6368;
    color: #bdc1c6;
    font-size: 24px;
}
.tab-last {
    width: 158px;
    border-right: none;
}
.favicon {
    width: 31px;
    height: 32px;
    flex: none;
    fill: #fff;
}
.tab-title {
    margin-left: 17px;
    flex: 1;
    overflow: hidden;
    white-space: nowrap;
    -webkit-mask-image: linear-gradient(90deg, #000 65%, transparent 100%);
    mask-image: linear-gradient(90deg, #000 65%, transparent 100%);
}
.tab-active {
    width: 165px;
    flex: none;
    position: relative;
    box-sizing: border-box;
    display: flex;
    align-items: center;
    padding: 0 23px 4px 17px;
    color: #fff;
    font-size: 24px;
    background-color: #35363a;
    border-radius: 18px 18px 0 0;
}
.tab-active::before,
.tab-active::after {
    content: "";
    position: absolute;
    bottom: 0;
    width: 16px;
    height: 16px;
}
.tab-active::before {
    left: -16px;
    background: radial-gradient(circle at 0 0, #202124 15.5px, #35363a 16px);
}
.tab-active::after {
    right: -16px;
    background: radial-gradient(circle at 100% 0, #202124 15.5px, #35363a 16px);
}
.tab-active .tab-title {
    width: 44px;
    margin-left: 15px;
    flex: none;
}
.tab-close {
    margin-left: 17px;
    flex: none;
}
.new-tab {
    margin: 21px 0 0 32px;
    flex: none;
}
.tab-menu {
    margin: 27px 0 0 132px;
    flex: none;
}

.toolbar {
    height: 74px;
    flex: none;
    box-sizing: border-box;
    display: flex;
    align-items: center;
    padding: 0 20px 2px 30px;
    background-color: #35363a;
    border-bottom: 2px solid #5b5c5f;
}
.nav-icon {
    margin-right: 36px;
    flex: none;
}
.omnibox {
    width: 2324px;
    height: 56px;
    margin-left: -6px;
    flex: none;
    box-sizing: border-box;
    display: flex;
    align-items: center;
    padding: 0 20px 0 28px;
    border-radius: 28px;
    background-color: #202124;
}
.url {
    margin-left: 24px;
    flex: 1;
    color: #9aa0a6;
    font-size: 28.3px;
}
.url-host {
    color: #fff;
}
.puzzle {
    margin-left: 30px;
    flex: none;
}
.avatar {
    width: 44px;
    height: 44px;
    margin-left: 26px;
    flex: none;
    display: flex;
    align-items: center;
    justify-content: center;
    border-radius: 50%;
    color: #fff;
    font-size: 18px;
    background-color: #3c8a7c;
}
.update {
    width: 176px;
    height: 56px;
    margin-left: 14px;
    flex: none;
    box-sizing: border-box;
    display: flex;
    align-items: center;
    justify-content: space-between;
    padding: 0 22px 0 25px;
    border: 2px solid #e0847a;
    border-radius: 28px;
    color: #e8897e;
    font-size: 26px;
    background-color: #3e3133;
}
.update-dots {
    display: flex;
    flex-direction: column;
    gap: 6px;
}
.update-dots i {
    width: 6px;
    height: 6px;
    border-radius: 50%;
    background-color: #e8897e;
}

/* user guide page */
.content {
    flex: 1;
    overflow: hidden;
    background: linear-gradient(#fff calc(100% - 40px), #e6e6e6);
}
.page {
    width: 1480px;
    margin-left: 697.5px;
    color: #3d3d3d;
    font-size: 32px;
    line-height: 48px;
}
.lead {
    margin: -8px 0 30px 61px;
    color: #111;
    font-size: 30.5px;
}
.summary {
    width: 100%;
    table-layout: fixed;
    border-collapse: collapse;
}
.col-action {
    width: 187px;
}
.col-format {
    width: 500px;
}
.summary th,
.summary td {
    padding: 20px 40px 20px 31px;
    border: 2px solid #e4e4e4;
    text-align: left;
}
.summary th {
    font-weight: 700;
    background-color: #f0f0f0;
}
.summary td:first-child {
    font-weight: 700;
    padding-right: 8px;
}
.summary tbody tr:nth-child(even) {
    background-color: #f8f8f8;
}
code {
    padding: 4px 10px;
    border: 1px solid #e8e8f0;
    border-radius: 6px;
    font-family: "DejaVu Sans Mono", "Liberation Mono", monospace;
    font-size: 29.9px;
    line-height: 1;
    background-color: #efeffd;
}

/* strip of other windows under the browser */
.behind {
    height: 14px;
    flex: none;
    display: flex;
    background-color: #120408;
    border-radius: 0 0 16px 16px;
}
.behind-grey {
    width: 420px;
    background: linear-gradient(90deg, #9a9a9a 0, #6e6e6e 40px);
    border-radius: 0 0 0 16px;
}
.behind-green {
    width: 1890px;
    background-color: #46694a;
}
.behind-rest {
    flex: 1;
    background: linear-gradient(90deg, #6e6e6e 80%, #b0b0b0 100%);
    border-radius: 0 0 16px 0;
}

/* dock */
.dock-row {
    flex: 1;
    padding: 4px 60px 0 59px;
    background: linear-gradient(#0e0306 4px, #2c0a12 4px);
}
.dock {
    height: 93px;
    box-sizing: border-box;
    display: flex;
    padding: 0 1px 0 2px;
    border: 2px solid #52303a;
    border-radius: 24px;
    background-color: #3b141d;
}
.dock-item {
    width: 76.6px;
    flex: none;
    display: flex;
    flex-direction: column;
    align-items: center;
    padding-top: 10px;
    box-sizing: border-box;
}
.dock-item > svg {
    width: 64px;
    height: 64px;
    overflow: visible;
}
.dock-item.on::after {
    content: "";
    width: 7px;
    height: 8px;
    margin-top: 6px;
    border-radius: 50%;
    background-color: #b08a98;
}
.dock-sep {
    width: 2px;
    height: 70px;
    margin: 10px 17px 0 19px;
    flex: none;
    background-color: #6b4a54;
}
.dock-sep-end {
    margin: 10px 14px 0 18px;
}
.badge {
    fill: #e5493f;
}
.badge-text {
    font-size: 18px;
    fill: #fff;
    text-anchor: middle;
}
.badge-text.small {
    font-size: 15px;
}
.cal-month {
    font-size: 13px;
    font-weight: 600;
    fill: #fff;
    text-anchor: middle;
}
.cal-day {
    font-size: 32px;
    fill: #222;
    text-anchor: middle;
}
.pages-quote {
    font-family: "Liberation Serif", serif;
    font-size: 40px;
    font-weight: 700;
    fill: #ee9a4a;
}
.tv-text {
    font-size: 27px;
    fill: #f2f2f2;
}
.chrome-count {
    font-size: 15px;
    fill: #333;
    text-anchor: middle;
}
.ij-text {
    font-family: "DejaVu Sans Mono", monospace;
    font-size: 21px;
    font-weight: 700;
    fill: #fff;
}
.xl-text {
    font-size: 17px;
    font-weight: 600;
    fill: #fff;
    text-anchor: middle;
}
```
